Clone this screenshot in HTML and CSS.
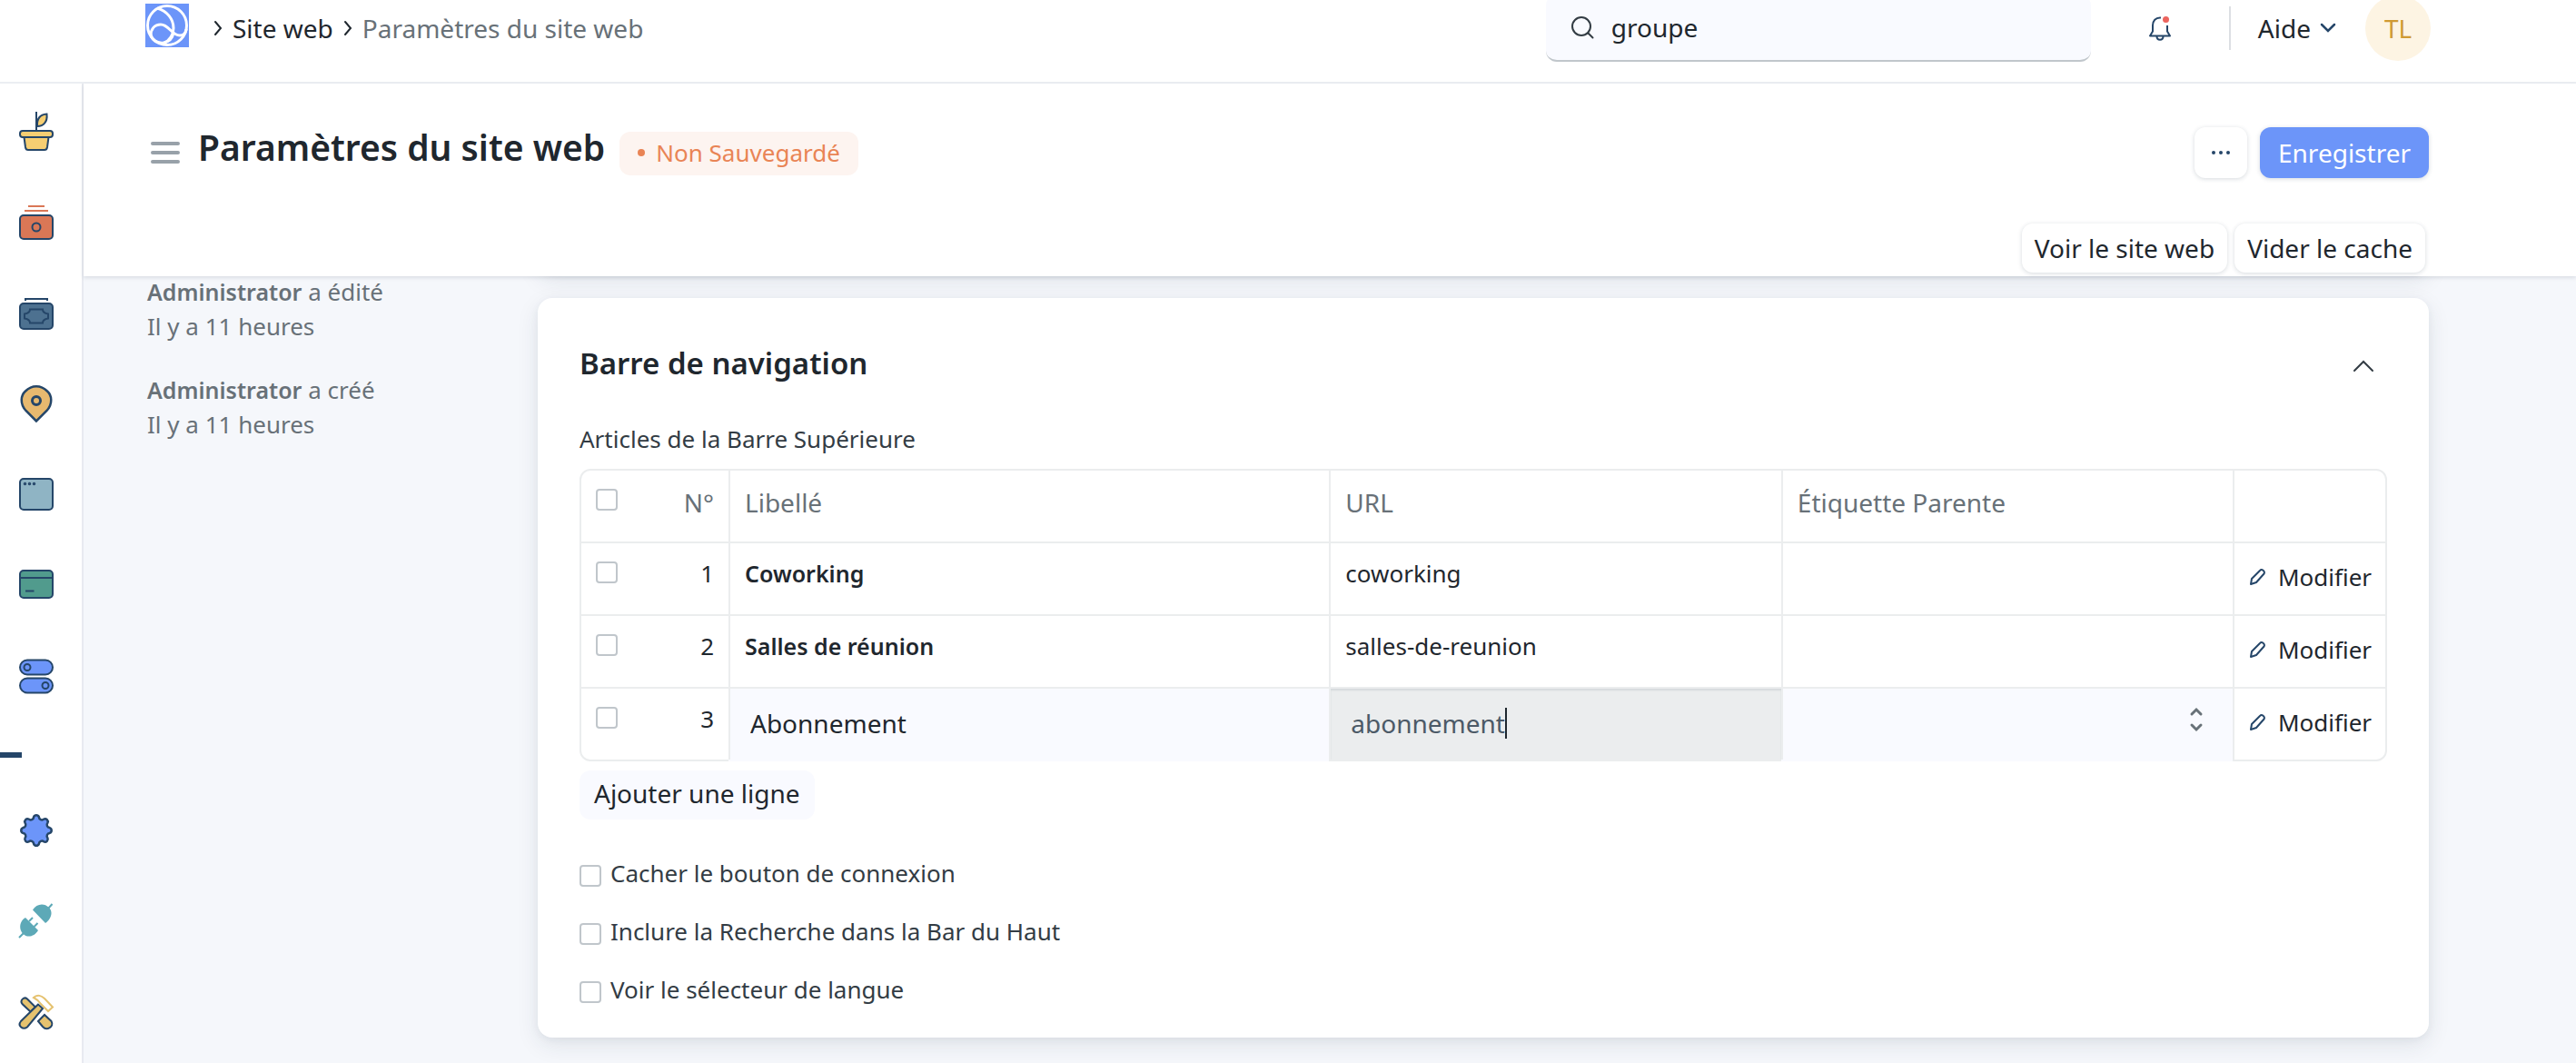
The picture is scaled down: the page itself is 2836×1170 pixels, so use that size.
FILE: index.html
```html
<!DOCTYPE html>
<html lang="fr">
<head>
<meta charset="utf-8">
<meta name="viewport" content="width=device-width, initial-scale=1">
<title>Paramètres du site web</title>
<link rel="stylesheet" href="styles.css">
</head>
<body>
<header class="navbar">
  <nav class="breadcrumb" aria-label="Fil d'Ariane">
    <a class="brand" href="#" aria-label="Accueil">
      <svg viewBox="0 0 48 48" width="48" height="48" fill="none" stroke="#fff" stroke-width="3"><rect width="48" height="48" fill="#6c95f9" stroke="none"/><circle cx="24" cy="24" r="21.500"/><path d="M13 5C24 8 31 17 31 27c0 8-5 14-12 18"/><path d="M6 35c0-7 4-12 11-12 9 0 12 12 21 12 4 0 7-3 7-7"/><path d="M6 34c1 6 7 10 14 9 6-1 10-5 11-11"/></svg>
    </a>
    <svg class="sep" viewBox="0 0 12 18" width="12" height="18"><path d="M3 2l6 7-6 7"/></svg>
    <a href="#">Site web</a>
    <svg class="sep" viewBox="0 0 12 18" width="12" height="18"><path d="M3 2l6 7-6 7"/></svg>
    <a class="current" href="#">Paramètres du site web</a>
  </nav>
  <label class="search">
    <svg viewBox="0 0 28 28" width="28" height="28" fill="none" stroke="#333c44" stroke-width="2" stroke-linecap="round"><circle cx="13" cy="13" r="10"/><path d="M20.500 20.500l5 5"/></svg>
    <input type="text" value="groupe" aria-label="Rechercher">
  </label>
  <button class="bell" type="button" aria-label="Notifications">
    <svg viewBox="0 0 28 30" width="28" height="30" fill="none" stroke="#254669" stroke-width="2" stroke-linejoin="round"><path d="M15 3.500C9 3 6 7 6 12v6.500L3 23.500h22l-3-5V12M10.500 24c0 5 7 5 7 0"/><circle cx="20.500" cy="5.500" r="3.500" fill="#ec645e" stroke="none"/></svg>
  </button>
  <button class="help" type="button">Aide
    <svg viewBox="0 0 18 12" width="18" height="12" fill="none" stroke="#254669" stroke-width="2.500" stroke-linecap="round"><path d="M2 2l7 7 7-7"/></svg>
  </button>
  <button class="avatar" type="button" aria-label="Profil">TL</button>
</header>

<div class="layout">
  <nav class="sidebar" aria-label="Modules">
    <a href="#" aria-label="Croissance"><svg viewBox="0 0 44 44" stroke="#254669" stroke-width="2" fill="#f6ce72"><path d="M22 0v21" fill="none"/><path d="M23 16C22.500 8 26 3 33.500 2.500 34.500 11 30 16 23 16z"/><path d="M8.500 28l1.500 11q.5 3 3 3h18q2.500 0 3-3l1.500-11z"/><rect x="4" y="21" width="36" height="7" rx="3"/></svg></a>
    <a href="#" aria-label="Caisse"><svg viewBox="0 0 44 44" stroke="#254669" stroke-width="2" fill="none"><path d="M13 4h18M9 9h26" stroke="#da7756"/><rect x="4" y="14" width="36" height="26" rx="4" fill="#da7756"/><circle cx="22" cy="27" r="4.500"/></svg></a>
    <a href="#" aria-label="Paiements"><svg viewBox="0 0 44 44" stroke="#254669" stroke-width="2" fill="none"><path d="M10 8V6h24v2"/><rect x="4" y="11" width="36" height="28" rx="4" fill="#4d7190"/><path d="M15 17.500h14q0 4 6 5v5q-6 1-6 5H15q0-4-6-5v-5q6-1 6-5z"/></svg></a>
    <a href="#" aria-label="Lieux"><svg viewBox="0 0 44 44" stroke="#254669" stroke-width="2.500" fill="#e7b96f"><path d="M22 40.500L10.500 29C3.500 21 5 12 10 7.500c7-7 17-7 24 0 5 4.500 6.500 13.500-.5 21.500z"/><circle cx="22" cy="18" r="4.500" stroke-width="3"/></svg></a>
    <a href="#" aria-label="Site"><svg viewBox="0 0 44 44" stroke="#254669" stroke-width="2" fill="#8fb4c4"><rect x="4" y="4" width="36" height="34" rx="4"/><g stroke-width="1.500"><circle cx="9.500" cy="9.500" r="1"/><circle cx="14.500" cy="9.500" r="1"/><circle cx="19.500" cy="9.500" r="1"/></g></svg></a>
    <a href="#" aria-label="Cartes"><svg viewBox="0 0 44 44" stroke="#254669" stroke-width="2" fill="#519b8d"><rect x="4" y="5" width="36" height="30" rx="4"/><path d="M4 13h36M10 27.500h9.500"/></svg></a>
    <a href="#" aria-label="Options"><svg viewBox="0 0 44 44" stroke="#254669" stroke-width="2" fill="#6c95f9"><rect x="4" y="3.500" width="36" height="16" rx="8"/><circle cx="12" cy="11.500" r="3.500"/><rect x="4" y="23.500" width="36" height="16" rx="8"/><circle cx="32" cy="31.500" r="3.500"/></svg></a>
    <hr>
    <a href="#" aria-label="Paramètres"><svg viewBox="-22 -22 44 44" stroke="#254669" stroke-width="2.500" fill="#6c95f9"><path d="M14.700-2.900A3.100 3.100 0 0 1 14.700 2.900 3.300 3.300 0 0 0 12.400 8.300 3.100 3.100 0 0 1 8.300 12.400 3.300 3.300 0 0 0 2.900 14.700 3.100 3.100 0 0 1-2.900 14.700 3.300 3.300 0 0 0-8.300 12.400 3.100 3.100 0 0 1-12.400 8.300 3.300 3.300 0 0 0-14.700 2.900 3.100 3.100 0 0 1-14.700-2.900 3.300 3.300 0 0 0-12.400-8.300 3.100 3.100 0 0 1-8.300-12.400 3.300 3.300 0 0 0-2.900-14.700 3.100 3.100 0 0 1 2.900-14.700 3.300 3.300 0 0 0 8.300-12.400 3.100 3.100 0 0 1 12.400-8.300 3.300 3.300 0 0 0 14.700-2.900z"/></svg></a>
    <a href="#" aria-label="Intégrations"><svg viewBox="0 0 44 44" fill="#5da9b7"><path d="M18 9.500L32 24C38 20 41 12 36 7 30 1 22 3 18 9.500zM10 18L24 32C20 39 12 40.500 7.500 36 2.500 31 3 22 10 18z"/><path d="M35 8l4.500-5M8 35l-5 5M14 22l4-4M19.500 28l4-4" stroke="#5da9b7" stroke-width="2"/></svg></a>
    <a href="#" aria-label="Outils"><svg viewBox="0 0 44 44" stroke="#254669" stroke-width="2" fill="#e5c26f"><path d="M15.500 21.500L6.500 13c-3-4 2-8.500 5.500-5.500l9 9zM24 32l7-7 7.500 7c3.500 6-5 11-9.500 6z"/><path d="M19 6c4-4 9-2 12 1l9 9.500-5 4.500L27 13c-2-3-4-5-8-7z" fill="#fff" stroke="#e5c26f"/><path d="M24 13.500L5 32c-4 5 2 10 7 6.500L29 18z"/></svg></a>
  </nav>

  <main class="page">
    <div class="page-head">
      <div class="title-row">
        <button class="menu" type="button" aria-label="Menu"><svg viewBox="0 0 32 28" width="32" height="28" stroke="#98a1a9" stroke-width="4" stroke-linecap="round"><path d="M2 4h28M2 14h28M2 24h28"/></svg></button>
        <h1>Paramètres du site web</h1>
        <span class="status">Non Sauvegardé</span>
        <button class="btn more" type="button" aria-label="Plus d'actions"><svg viewBox="0 0 24 6" width="24" height="6" fill="#254669"><circle cx="4" cy="3" r="2"/><circle cx="12" cy="3" r="2"/><circle cx="20" cy="3" r="2"/></svg></button>
        <button class="btn primary" type="button">Enregistrer</button>
      </div>
      <div class="actions">
        <button class="btn" type="button">Voir le site web</button>
        <button class="btn" type="button">Vider le cache</button>
      </div>
    </div>

    <div class="content">
      <aside class="history">
        <p><b>Administrator</b> a édité<br>Il y a 11 heures</p>
        <p><b>Administrator</b> a créé<br>Il y a 11 heures</p>
      </aside>
      <div class="cards">
      <div class="card previous"></div>
      <section class="card">
        <div class="card-head">
          <h2>Barre de navigation</h2>
          <button type="button" aria-label="Réduire"><svg viewBox="0 0 24 14" width="24" height="14" fill="none" stroke="#333c44" stroke-width="2" stroke-linecap="round"><path d="M2 12L12 2l10 10"/></svg></button>
        </div>
        <p class="label" id="items">Articles de la Barre Supérieure</p>
        <table aria-labelledby="items">
          <colgroup><col class="c-no"><col class="c-label"><col class="c-url"><col class="c-parent"><col class="c-edit"></colgroup>
          <thead>
            <tr><th><div class="pick"><input type="checkbox" aria-label="Tout sélectionner"><span>N°</span></div></th><th>Libellé</th><th>URL</th><th>Étiquette Parente</th><th></th></tr>
          </thead>
          <tbody>
            <tr><td><div class="pick"><input type="checkbox" aria-label="Ligne 1"><span>1</span></div></td><td><b>Coworking</b></td><td>coworking</td><td></td><td class="edit"><button type="button"><svg viewBox="0 0 20 20" width="20" height="20"><path d="M2 18l1-6L12 3c2-2.500 6 .5 4.500 3.500L8 16z"/></svg>Modifier</button></td></tr>
            <tr><td><div class="pick"><input type="checkbox" aria-label="Ligne 2"><span>2</span></div></td><td><b>Salles de réunion</b></td><td>salles-de-reunion</td><td></td><td class="edit"><button type="button"><svg viewBox="0 0 20 20" width="20" height="20"><path d="M2 18l1-6L12 3c2-2.500 6 .5 4.500 3.500L8 16z"/></svg>Modifier</button></td></tr>
            <tr><td><div class="pick"><input type="checkbox" aria-label="Ligne 3"><span>3</span></div></td><td class="field"><input type="text" value="Abonnement" aria-label="Libellé"></td><td class="field active"><div class="typing"><input type="text" value="abonnement" aria-label="URL"><i class="caret"></i></div></td><td class="field"><div class="choice"><select aria-label="Étiquette Parente"><option></option></select><svg viewBox="0 0 16 28" width="16" height="28" fill="none" stroke="#687178" stroke-width="3" stroke-linecap="round"><path d="M3 8l5-5 5 5M3 20l5 5 5-5"/></svg></div></td><td class="edit"><button type="button"><svg viewBox="0 0 20 20" width="20" height="20"><path d="M2 18l1-6L12 3c2-2.500 6 .5 4.500 3.500L8 16z"/></svg>Modifier</button></td></tr>
          </tbody>
        </table>
        <button class="add" type="button">Ajouter une ligne</button>
        <div class="options">
          <label><input type="checkbox"><span>Cacher le bouton de connexion</span></label>
          <label><input type="checkbox"><span>Inclure la Recherche dans la Bar du Haut</span></label>
          <label><input type="checkbox"><span>Voir le sélecteur de langue</span></label>
        </div>
      </section>
      </div>
    </div>
  </main>
</div>
</body>
</html>
```
FILE: styles.css
```css
* { box-sizing: border-box; }

body {
  margin: 0;
  height: 100vh;
  overflow: hidden;
  display: flex;
  flex-direction: column;
  background: #f5f7fb;
  color: #1f272e;
  font: 26px/38px "Noto Sans", "Open Sans", sans-serif;
}

button, input, select { font: inherit; color: inherit; }
button { border: 0; padding: 0; background: none; }
a { color: inherit; text-decoration: none; }
h1, h2, p { margin: 0; }
h1, h2, b { font-weight: 600; }
b { font-size: 25px; }
svg { display: block; flex: none; }

input[type="checkbox"] {
  appearance: none;
  flex: none;
  width: 24px;
  height: 24px;
  margin: 0;
  border: 2px solid #c0c6cb;
  border-radius: 4px;
  background: #fff;
}

/* Top bar, partly scrolled above the window edge */
.navbar {
  flex: none;
  display: flex;
  align-items: center;
  height: 120px;
  margin-top: -28px;
  padding: 0 160px;
  border-bottom: 2px solid #ebeef2;
  background: #fff;
  font-size: 28px;
}

.breadcrumb { display: flex; align-items: center; gap: 10px; flex: 1; }
.brand { margin: -6px 16px 0 0; }
.sep { fill: none; stroke: #1f272e; stroke-width: 2; stroke-linecap: round; }
.current { color: #687178; }

.search {
  display: flex;
  align-items: center;
  gap: 18px;
  width: 600px;
  height: 74px;
  padding: 0 26px;
  border-bottom: 2px solid #c0c6cb;
  border-radius: 12px;
  background: #f9faff;
}
.search input { flex: 1; min-width: 0; border: 0; padding: 0; background: none; }

.bell { margin: 0 62px; }
.help {
  display: flex;
  align-items: center;
  gap: 10px;
  height: 48px;
  margin-right: 32px;
  padding-left: 30px;
  border-left: 2px solid #dcdfe3;
}
.avatar {
  width: 72px;
  height: 72px;
  border-radius: 50%;
  background: #fdf4e3;
  color: #cf9a34;
}

.layout { flex: 1; min-height: 0; display: flex; }

.sidebar {
  flex: none;
  width: 92px;
  padding-top: 3px;
  border-right: 2px solid #e8eaf0;
  background: #fff;
}
.sidebar a { display: grid; height: 100px; padding-left: 18px; align-items: center; }
.sidebar svg { width: 44px; height: 44px; }
.sidebar hr { width: 24px; height: 6px; margin: 33px 0 30px; border: 0; background: #254669; }

.page { flex: 1; min-width: 0; display: flex; flex-direction: column; }

.page-head {
  flex: none;
  position: relative;
  height: 212px;
  padding: 46px 162px 0 70px;
  background: #fff;
  box-shadow: 0 2px 4px rgba(30, 50, 70, .12);
}
.title-row { display: flex; align-items: center; height: 60px; }
.menu { margin: 0 20px 0 4px; }
h1 { font-size: 39px; line-height: 48px; margin-top: -12px; }
.status {
  display: flex;
  align-items: center;
  gap: 12px;
  height: 48px;
  margin: 2px auto 0 16px;
  padding: 0 20px 2px;
  border-radius: 12px;
  background: #fdf4f0;
  color: #e98455;
}
.status::before { content: ""; width: 8px; height: 8px; border-radius: 50%; background: #e98455; }

.btn {
  height: 56px;
  padding: 0 14px;
  border-radius: 12px;
  background: #fff;
  box-shadow: 0 1px 5px rgba(30, 50, 70, .18);
  font-size: 28px;
}
.more { width: 58px; margin-right: 14px; padding: 0 17px; }
.primary { padding: 0 20px; background: #6c95f9; color: #fff; }
.actions { display: flex; justify-content: flex-end; gap: 8px; padding: 48px 4px 0 0; }
.actions .btn { height: 54px; }

.content { display: flex; padding: 0 162px 0 70px; }
.history { flex: none; width: 430px; color: #687178; margin-top: -2px; }
.history p { margin-bottom: 32px; }

.cards { flex: 1; min-width: 0; }
.card {
  padding: 48px 46px 34px;
  border-radius: 16px;
  background: #fff;
  box-shadow: 0 8px 24px rgba(30, 50, 70, .1), 0 2px 8px rgba(30, 50, 70, .05);
}
.previous { height: 40px; margin: -44px 0 28px; padding: 0; }

.card-head { display: flex; justify-content: space-between; align-items: center; padding-right: 14px; }
.card-head button { padding-top: 6px; }
h2 { font-size: 33px; line-height: 48px; }
.label { margin: 40px 0 14px; color: #333c44; }

table {
  width: 100%;
  table-layout: fixed;
  border-collapse: separate;
  border-spacing: 0;
  border: 2px solid #ebedee;
  border-radius: 12px;
}
.c-no { width: 162px; }
.c-label { width: 33.300%; }
.c-url { width: 25.050%; }
.c-edit { width: 168px; }
th, td {
  height: 80px;
  padding: 14px 16px 0;
  border-left: 2px solid #ebedee;
  border-top: 2px solid #ebedee;
  text-align: left;
  vertical-align: top;
  font-weight: 400;
}
th { height: 78px; padding-top: 16px; border-top: 0; color: #687178; font-size: 28px; }
th:first-child, td:first-child { border-left: 0; }
.pick { display: flex; justify-content: space-between; }
.pick input { margin-top: 6px; }
th .pick input { margin-top: 4px; }

.edit { padding-top: 18px; }
.edit button { display: flex; align-items: center; gap: 12px; }
.edit path { fill: none; stroke: #254669; stroke-width: 2; stroke-linejoin: round; }

.field { padding: 0; background: #f9faff; box-shadow: 0 2px 0 #f9faff; font-size: 28px; }
.field input, .field select {
  appearance: none;
  width: 100%;
  height: 76px;
  padding: 0 22px;
  border: 0;
  background: none;
}
.active { background: #ebedee; color: #4c5a67; box-shadow: 0 2px 0 #ebedee, inset 0 2px 2px rgba(30, 50, 70, .1); }
.typing, .choice { display: flex; align-items: center; }
.typing input { field-sizing: content; width: auto; padding-right: 0; }
.caret { width: 2px; height: 34px; background: #1f272e; }
.choice { padding-right: 32px; }
.choice select { flex: 1; min-width: 0; }
.choice svg { margin-top: -8px; }

.add { display: block; height: 54px; margin-top: 10px; padding: 0 16px 4px; border-radius: 12px; background: #f9faff; font-size: 28px; }
.options { display: grid; gap: 26px; margin-top: 40px; color: #333c44; }
.options label { display: flex; align-items: center; gap: 10px; justify-self: start; }
.options input { margin-top: 6px; }
```
